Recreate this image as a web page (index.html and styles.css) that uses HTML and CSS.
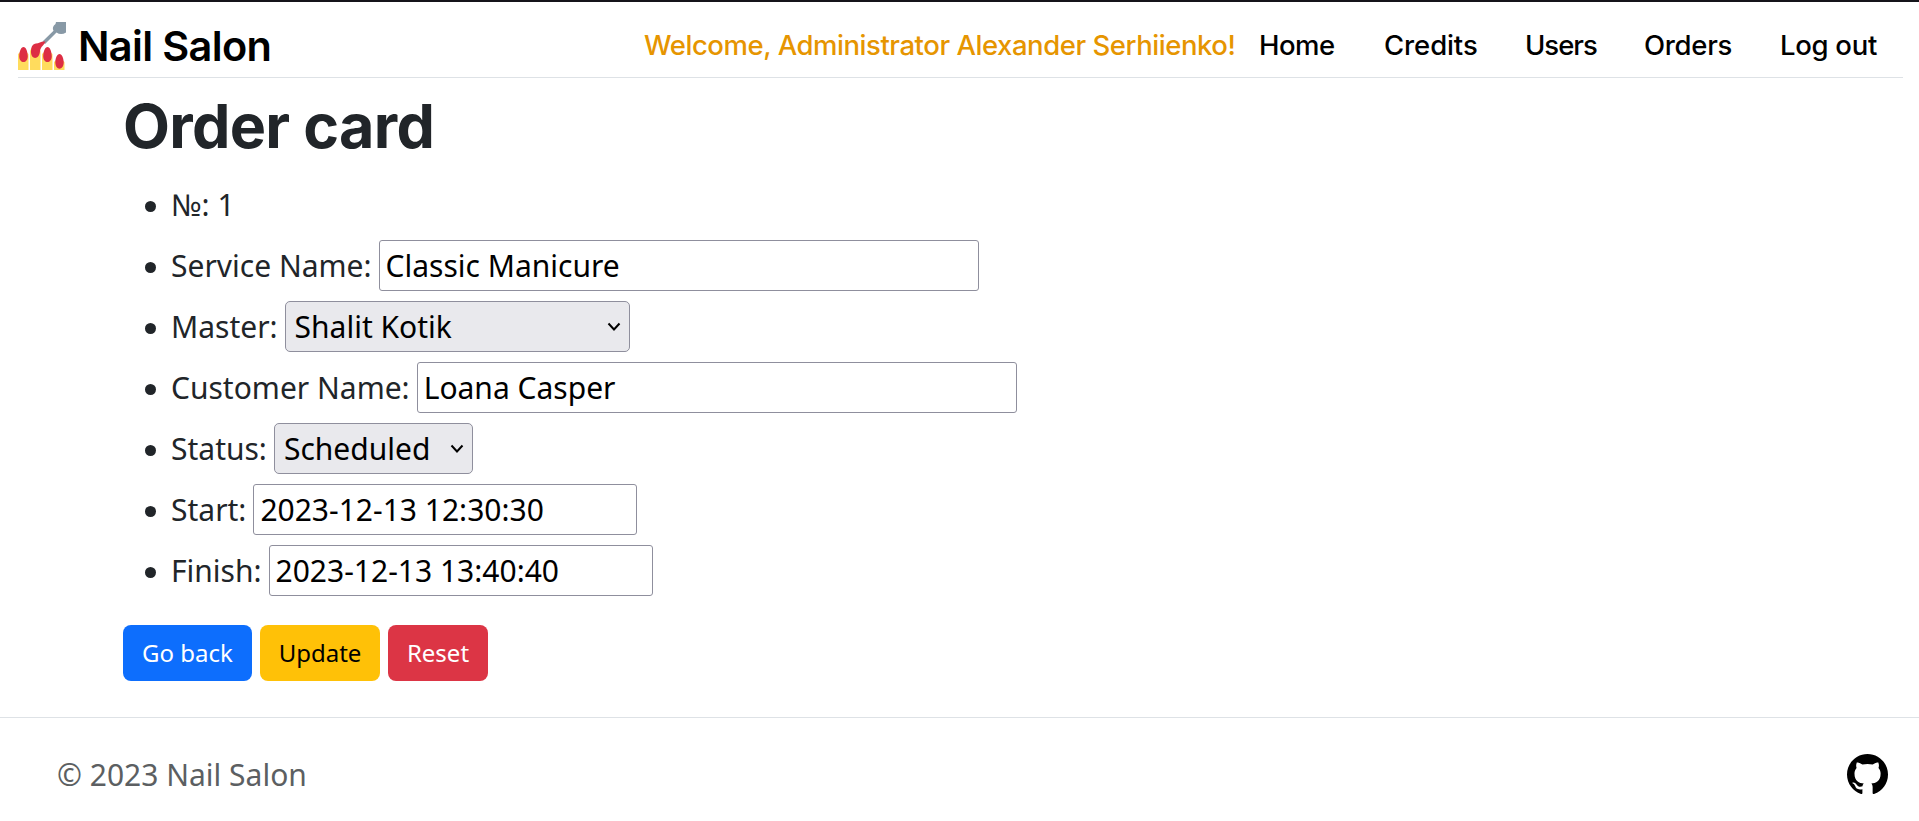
FILE: index.html
```html
<!DOCTYPE html>
<html lang="en">
<head>
<meta charset="utf-8">
<title>Nail Salon</title>
<link rel="stylesheet" href="styles.css">
</head>
<body>
<header class="header">
  <a class="brand">
    <svg class="brand-icon" viewBox="0 0 48 48">
      <path fill="#ffdc5d" d="M0 32Q5 26 10.500 32V48H0zM12 29Q17 18 22.500 29V48H12zM24 32Q29 26 34.500 32V48H24zM36 40Q41 33 46.500 40V48H36z"/>
      <path fill="#8899a6" d="M24.500 19.500 35.500 8.800Q33.500 5 37.500 2L38 0H48V10.500Q43 13.500 38.500 10.500L27 22z"/>
      <path fill="#dd2e44" d="M5.500 25C8 25 9.500 29 9.800 34c.2 8-8.800 8-8.600 0C1.500 29 3 25 5.500 25zM13 30c0-6 2-8 5-8.500 3 0 5-2.500 9.500-2-1.500 4-4.500 4.500-5.500 9.500C21.500 38 13 38 13 30zM29.500 25c2.500 0 4 4 4.300 9 .2 8-8.800 8-8.600 0 .3-5 1.800-9 4.300-9zM41.500 32c2.500 0 4 4 4.200 8 .2 9-8.600 9-8.400 0 .2-4 1.700-8 4.200-8z"/>
    </svg>
    <span class="brand-name">Nail Salon</span>
  </a>
  <nav class="nav">
    <span class="welcome">Welcome, Administrator Alexander Serhiienko!</span>
    <a class="nav-link home">Home</a>
    <a class="nav-link credits">Credits</a>
    <a class="nav-link users">Users</a>
    <a class="nav-link orders">Orders</a>
    <a class="nav-link logout">Log out</a>
  </nav>
</header>
<main class="main">
  <h1 class="title">Order card</h1>
  <ul class="fields">
    <li class="field">№: 1</li>
    <li class="field"><label>Service Name:</label><input class="control wide" type="text" value="Classic Manicure"></li>
    <li class="field"><label>Master:</label><span class="picker"><select class="control select master"><option>Shalit Kotik</option></select><svg class="chevron" viewBox="0 0 14 10"><path d="M1.500 1.500 7 7.500 12.500 1.500"/></svg></span></li>
    <li class="field"><label>Customer Name:</label><input class="control wide" type="text" value="Loana Casper"></li>
    <li class="field"><label>Status:</label><span class="picker"><select class="control select status"><option>Scheduled</option></select><svg class="chevron" viewBox="0 0 14 10"><path d="M1.500 1.500 7 7.500 12.500 1.500"/></svg></span></li>
    <li class="field"><label>Start:</label><input class="control date" type="text" value="2023-12-13 12:30:30"></li>
    <li class="field"><label>Finish:</label><input class="control date" type="text" value="2023-12-13 13:40:40"></li>
  </ul>
  <div class="actions">
    <button class="btn primary">Go back</button>
    <button class="btn warning">Update</button>
    <button class="btn danger">Reset</button>
  </div>
</main>
<footer class="footer">
  <span>© 2023 Nail Salon</span>
  <svg class="github" viewBox="0 0 16 16"><path d="M8 0C3.580 0 0 3.580 0 8c0 3.540 2.290 6.530 5.470 7.590.4.070.55-.17.55-.38 0-.19-.01-.82-.01-1.490-2.010.37-2.530-.49-2.690-.94-.09-.23-.48-.94-.82-1.130-.28-.15-.68-.52-.01-.53.63-.01 1.080.58 1.230.82.72 1.210 1.870.87 2.330.66.07-.52.28-.87.51-1.070-1.780-.2-3.640-.89-3.640-3.950 0-.87.31-1.590.82-2.150-.08-.2-.36-1.020.08-2.120 0 0 .67-.21 2.200.82.64-.18 1.320-.27 2-.27s1.360.09 2 .27c1.530-1.040 2.200-.82 2.200-.82.44 1.100.16 1.920.08 2.120.51.56.82 1.270.82 2.150 0 3.070-1.870 3.750-3.650 3.950.29.25.54.73.54 1.480 0 1.070-.01 1.930-.01 2.200 0 .21.15.46.55.38A8.010 8.010 0 0 0 16 8c0-4.420-3.580-8-8-8z"/></svg>
</footer>
</body>
</html>
```
FILE: styles.css
```css
* { box-sizing: border-box; }
body {
  margin: 0;
  min-height: 821px;
  border-top: 2px solid #15141a;
  background: #fff;
  color: #212529;
  font: 30px/1.5 "Noto Sans", sans-serif;
}
.header {
  display: flex;
  justify-content: space-between;
  align-items: flex-start;
  height: 76px;
  margin: 0 16px 0 18px;
  padding-top: 20px;
  border-bottom: 1px solid #dee2e6;
  color: #000;
  font-family: Inter, sans-serif;
}
.brand { display: flex; gap: 12px; line-height: 48px; }
.brand-icon { width: 48px; height: 48px; }
.brand-name { font-size: 41.500px; font-weight: 600; letter-spacing: -.65px; }
.nav {
  display: flex;
  padding-right: 25px;
  font-size: 27.500px;
  font-weight: 500;
  line-height: 46px;
  white-space: nowrap;
}
.welcome { width: 615px; color: #e69500; letter-spacing: -.45px; }
.nav-link { letter-spacing: -.3px; }
.home { width: 125px; letter-spacing: -.5px; }
.credits { width: 141px; letter-spacing: -.1px; }
.users { width: 119px; letter-spacing: -1px; }
.orders { width: 136px; }
.logout { width: 98px; }
.main { padding: 11px 123px 0; }
.title {
  margin: 0;
  font: 700 61px/74px Inter, sans-serif;
  letter-spacing: -.7px;
}
.fields { margin: 11px 0 0; padding: 0 0 0 48px; list-style: none; }
.field { display: flex; align-items: center; gap: 7px; height: 61px; }
.field::before {
  content: "";
  width: 11px;
  height: 11px;
  margin: 4px 8px 0 -26px;
  border-radius: 50%;
  background: #212529;
}
.control {
  height: 51px;
  margin: 0;
  padding: 0 6px;
  border: 1px solid #8f8f9d;
  border-radius: 3px;
  background: #fff;
  color: #000;
  font: 30px/49px "Noto Sans", sans-serif;
}
.wide { width: 600px; }
.date { width: 384px; }
.picker { position: relative; display: flex; }
.select { appearance: none; padding: 0 8px 0 9px; border-radius: 5px; background: #e9e9ed; }
.master { width: 345px; }
.status { width: 199px; }
.chevron {
  position: absolute;
  right: 9px;
  top: 21px;
  width: 14px;
  height: 10px;
  fill: none;
  stroke: #000;
  stroke-width: 2;
}
.actions { display: flex; gap: 8px; margin-top: 24px; }
.btn {
  height: 56px;
  padding: 0;
  border: 0;
  border-radius: 8px;
  font: 24px/56px "Noto Sans", sans-serif;
}
.primary { width: 129px; background: #0d6efd; color: #fff; }
.warning { width: 120px; background: #ffc107; color: #000; }
.danger { width: 100px; background: #dc3545; color: #fff; }
.footer {
  display: flex;
  justify-content: space-between;
  align-items: center;
  height: 114px;
  margin-top: 36px;
  padding: 0 31px 0 57px;
  border-top: 1px solid #dee2e6;
  color: #5c5f62;
}
.github { width: 41px; height: 41px; fill: #000; }
```
